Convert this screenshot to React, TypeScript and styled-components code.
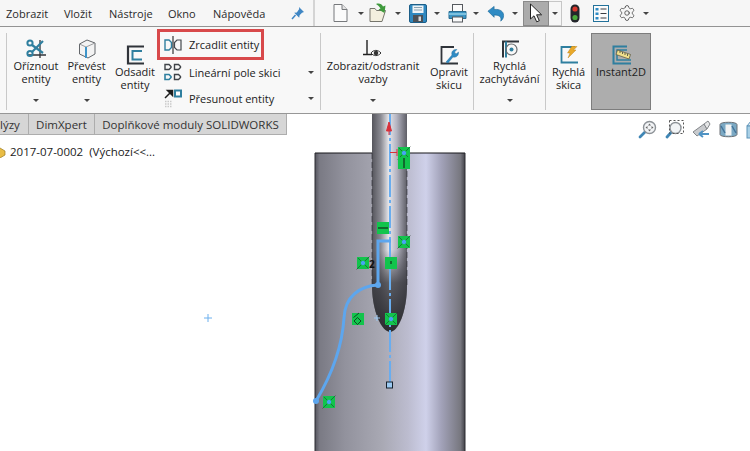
import React from 'react';
import styled, { createGlobalStyle } from 'styled-components';
import { Settings } from 'lucide-react';

const Global = createGlobalStyle`
    html, body {
        margin: 0;
        padding: 0;
        background: #fff;
    }
`;

const Page = styled.div`
    width: 750px;
    height: 451px;
    overflow: hidden;
    display: flex;
    flex-direction: column;
    font-family: "Open Sans", "Liberation Sans", sans-serif;
    font-size: 11px;
    line-height: 13px;
    color: #222;
    background: #fff;
`;

const TopBar = styled.div`
    height: 26px;
    flex: none;
    display: flex;
    background: #f6f6f6;
    border-bottom: 1px solid #939393;
    box-sizing: content-box;
`;

const MenuBar = styled.div`
    width: 315px;
    flex: none;
    display: flex;
    align-items: center;
    padding-left: 6px;
    box-sizing: border-box;
    border-right: 2px solid #d4d4d4;
`;

const MenuItem = styled.span<{ $width: number }>`
    width: ${(p) => p.$width}px;
    flex: none;
    font-size: 11px;
    color: #2a2a2a;
`;

const ToolBar = styled.div`
    flex: 1;
    display: flex;
    align-items: center;
    padding-left: 18px;
`;

const ToolSlot = styled.div<{ $width: number; $gap?: number }>`
    width: ${(p) => p.$width}px;
    height: 26px;
    flex: none;
    display: flex;
    align-items: center;
    gap: ${(p) => p.$gap ?? 6}px;
`;

const CursorButton = styled.div`
    width: 26px;
    height: 25px;
    flex: none;
    display: flex;
    align-items: center;
    justify-content: center;
    background: #ababab;
    border: 1px solid #8a8a8a;
    box-sizing: border-box;
`;

const CursorCaret = styled.div`
    width: 13px;
    height: 25px;
    flex: none;
    display: flex;
    align-items: center;
    justify-content: center;
    box-sizing: border-box;
    border: 1px solid #c6c6c6;
    border-left: none;
    margin-right: 8px;
`;

const Caret = styled.i`
    display: block;
    width: 0;
    height: 0;
    flex: none;
    border-left: 3px solid transparent;
    border-right: 3px solid transparent;
    border-top: 3px solid #444;
`;

const Ribbon = styled.div`
    height: 86px;
    flex: none;
    display: flex;
    background: #f8f8f8;
    border-bottom: 1px solid #979797;
    box-sizing: content-box;
`;

const Separator = styled.div<{ $left?: number }>`
    width: 1px;
    flex: none;
    background: #c9c9c9;
    margin: 6px 0 3px ${(p) => p.$left ?? 0}px;
`;

const BigButton = styled.div<{ $width: number; $low?: boolean; $left?: number; $active?: boolean }>`
    width: ${(p) => p.$width}px;
    margin-left: ${(p) => p.$left ?? 0}px;
    flex: none;
    display: flex;
    flex-direction: column;
    align-items: center;
    box-sizing: border-box;
    text-align: center;
    padding-top: ${(p) => (p.$low ? 18 : 12)}px;
    padding-bottom: 11px;
    ${(p) =>
        p.$active &&
        `
        background: #adadad;
        border: 1px solid #7d7d7d;
        margin-top: 6px;
        margin-bottom: 3px;
        padding-top: 11px;
    `}
`;

const IconSlot = styled.div`
    height: 20px;
    display: flex;
    align-items: center;
    justify-content: center;
    flex: none;
`;

const Label = styled.div`
    font-size: 11px;
    line-height: 13px;
    white-space: nowrap;
`;

const BottomCaret = styled(Caret)`
    margin-top: auto;
`;

const SmallColumn = styled.div`
    width: 163px;
    flex: none;
    display: flex;
    flex-direction: column;
    padding-top: 2px;
    box-sizing: border-box;
`;

const SmallRow = styled.div<{ $boxed?: boolean }>`
    display: flex;
    align-items: center;
    gap: 7px;
    box-sizing: border-box;
    white-space: nowrap;
    font-size: 11px;
    ${(p) =>
        p.$boxed
            ? `
        width: 107px;
        height: 31px;
        padding-left: 4px;
        border: 3px solid #d8494b;
    `
            : `
        height: 25.5px;
        padding: 0 6px 0 7px;
    `}
`;

const RowCaret = styled(Caret)`
    margin-left: auto;
`;

const Viewport = styled.div`
    flex: 1;
    position: relative;
    overflow: hidden;
    background: #fff;
`;

const ModelDrawing = styled.svg`
    position: absolute;
    left: 0;
    top: 0;
`;

const TabRow = styled.div`
    position: relative;
    display: flex;
    width: 287px;
    height: 21px;
    background: #fff;
`;

const Tab = styled.div<{ $width: number; $clipped?: boolean }>`
    width: ${(p) => p.$width}px;
    flex: none;
    display: flex;
    align-items: center;
    justify-content: ${(p) => (p.$clipped ? 'flex-start' : 'center')};
    box-sizing: border-box;
    background: #d6d6d6;
    border: 1px solid #adadad;
    border-top: none;
    border-left: none;
    font-size: 11.5px;
    white-space: nowrap;
    color: #333;
`;

const TreeRow = styled.div`
    position: relative;
    display: flex;
    align-items: center;
    gap: 4px;
    margin-top: 10px;
    margin-left: -6px;
    font-size: 11.5px;
    white-space: pre;
    color: #222;
`;

const ViewTools = styled.div`
    position: absolute;
    top: 6px;
    left: 638px;
    display: flex;
    align-items: center;
    gap: 8px;
`;

const teal = '#2f7f9f';
const dark = '#30343a';

const PinIcon = () => (
    <svg width="14" height="14" viewBox="0 0 14 14">
        <path d="M8 1l5 5-2 .8-2.4 2.4-.4 2.6-5-5 2.6-.4L8.200 3z" fill="#3f86c4" />
        <path d="M4.500 9L1 13" stroke="#3f86c4" strokeWidth="1.500" />
    </svg>
);

const NewIcon = () => (
    <svg width="15" height="20" viewBox="0 0 15 20">
        <path d="M1 1.500h8l5 5v12H1z" fill="#fbfbfb" stroke="#77797c" />
        <path d="M9 1.500v5h5" fill="#e3e3e3" stroke="#77797c" />
    </svg>
);

const OpenIcon = () => (
    <svg width="20" height="20" viewBox="0 0 20 20">
        <path d="M1 5.500h5l1.500 2h9l-3.500 11H1z" fill="#f3efdf" stroke="#76756c" />
        <path d="M7 1c3-1 6 0 7 2.500l2.500-1-1 7.500-6-3.500 2-1C10.500 3.500 9 2.500 7 1z" fill="#3f9a3c" />
    </svg>
);

const SaveIcon = () => (
    <svg width="18" height="19" viewBox="0 0 18 19">
        <rect x="0.500" y="0.500" width="17" height="18" rx="1.500" fill="#2f88c0" stroke="#1c5e88" />
        <rect x="3.500" y="1.500" width="11" height="7.500" fill="#eef3f6" />
        <path d="M5 3.500h8M5 6h8" stroke="#8aa3b3" />
        <rect x="4" y="11" width="10" height="7" fill="#4c5157" />
        <rect x="9.500" y="12.500" width="2.500" height="4.500" fill="#d5d8db" />
    </svg>
);

const PrintIcon = () => (
    <svg width="19" height="19" viewBox="0 0 19 19">
        <rect x="4.500" y="0.500" width="10" height="7" fill="#fafafa" stroke="#55595e" />
        <path d="M1 7.500h17v7H1z" fill="#3c95c4" stroke="#2a6d92" />
        <rect x="0.500" y="9" width="18" height="2" fill="#7cc0de" />
        <rect x="4.500" y="13" width="10" height="5" fill="#fafafa" stroke="#55595e" />
    </svg>
);

const UndoIcon = () => (
    <svg width="18" height="17" viewBox="0 0 19 17">
        <path d="M1 6L7.500 1v3.300c6-.8 10 2 10 6.200 0 2.500-1 4.500-3 6 1-3.500-.5-6.500-7-6.500v2.500z" fill="#2f8bc4" stroke="#1f6a9b" strokeWidth="0.700" />
    </svg>
);

const CursorIcon = () => (
    <svg width="14" height="20" viewBox="0 0 14 20">
        <path d="M1.500 1v15l3.500-3.200 2.700 6 2.600-1.100-2.700-5.900h5z" fill="#fff" stroke="#222" strokeLinejoin="round" />
    </svg>
);

const LightIcon = () => (
    <svg width="10" height="19" viewBox="0 0 10 19">
        <rect x="0.500" y="0.500" width="9" height="18" rx="4.500" fill="#23262a" />
        <circle cx="5" cy="5" r="2.600" fill="#d8392f" />
        <circle cx="5" cy="13.500" r="2.600" fill="#49a83b" />
    </svg>
);

const ListIcon = () => (
    <svg width="16" height="17" viewBox="0 0 16 17">
        <rect x="0.500" y="0.500" width="15" height="16" fill="#fbfbfb" stroke="#22719a" />
        <path d="M2.500 3h3v2.500h-3zM2.500 7.500h3V10h-3zM2.500 12h3v2.500h-3z" fill="#2f8bc4" />
        <path d="M7.500 4h6M7.500 8.500h6M7.500 13h6" stroke="#3a3d42" />
    </svg>
);

const TrimIcon = () => (
    <svg width="20" height="20" viewBox="0 0 20 20">
        <path d="M14 1v18M2 16h18" stroke={dark} strokeWidth="1.300" />
        <path d="M6 6l11 8M6 13l11-11" stroke={teal} strokeWidth="2.200" />
        <circle cx="4" cy="4" r="2.600" fill="none" stroke={teal} strokeWidth="2" />
        <circle cx="4" cy="14.500" r="2.600" fill="none" stroke={teal} strokeWidth="2" />
    </svg>
);

const ConvertIcon = () => (
    <svg width="18" height="20" viewBox="0 0 18 20">
        <path d="M9 1l8 3v11l-7 4-8.500-4V5z" fill="#f3f3f3" stroke="#63666a" />
        <path d="M1.500 5L8 8l9-4" fill="none" stroke="#9a9c9f" />
        <path d="M8 8v11" stroke="#3d94c9" strokeWidth="2" />
    </svg>
);

const OffsetIcon = () => (
    <svg width="19" height="20" viewBox="0 0 19 20">
        <path d="M18 1.500H2v17h16" fill="none" stroke={dark} strokeWidth="2.200" />
        <path d="M16 6H6.500v8.500H16" fill="none" stroke={teal} strokeWidth="2" />
    </svg>
);

const MirrorIcon = () => (
    <svg width="18" height="18" viewBox="0 0 18 18">
        <path d="M1 4h4l2.500 2.500v5L5 14H1z" fill="none" stroke={teal} strokeWidth="1.400" />
        <path d="M9 0v18" stroke="#222" strokeWidth="1.100" />
        <path d="M17 4h-4l-2.500 2.500v5L13 14h4z" fill="none" stroke="#44484d" strokeWidth="1.200" />
    </svg>
);

const PatternIcon = () => (
    <svg width="18" height="19" viewBox="0 0 18 19">
        <path d="M1 1.500h4l2 2v1l-2 2H1zM10.500 1.500h4l2 2v1l-2 2h-4z" fill="none" stroke="#3f4348" strokeWidth="1.400" />
        <path d="M1 11.500h4l2 2v1l-2 2H1z" fill="none" stroke={teal} strokeWidth="1.600" />
        <path d="M10.500 11.500h4l2 2v1l-2 2h-4z" fill="none" stroke="#3f4348" strokeWidth="1.400" />
    </svg>
);

const MoveIcon = () => (
    <svg width="18" height="19" viewBox="0 0 18 19">
        <path d="M1 9l6-6M3.500 1.500h5v5z" stroke="#1e1e1e" strokeWidth="1.500" fill="#1e1e1e" />
        <rect x="11" y="1.500" width="6" height="6" fill="#fff" stroke={teal} strokeWidth="2" />
        <path d="M1 12.500h7M1 15h7M1 17.500h7" stroke="#c9c9c9" strokeWidth="1.500" strokeDasharray="1.500 1" />
    </svg>
);

const RelationIcon = () => (
    <svg width="20" height="18" viewBox="0 0 20 18">
        <path d="M4 0v14M0 14.500h9" stroke="#222" strokeWidth="1.400" />
        <path d="M8 13c2.500-3.500 7-3.500 10 0-3 3.500-7.500 3.500-10 0z" fill="#fff" stroke="#333" />
        <circle cx="13" cy="13" r="2.300" fill="#333" />
    </svg>
);

const RepairIcon = () => (
    <svg width="19" height="19" viewBox="0 0 19 19">
        <path d="M14 1H1.500v16.500H18" fill="none" stroke={dark} strokeWidth="1.800" />
        <path d="M6 16l6-7c-1-3 1-6 5-5.500l-2.500 2.500 1.500 2 2.500-2c.5 3.500-2.500 6-5.500 5L8 17z" fill="#2f8bc4" stroke="#1f6a9b" strokeWidth="0.400" />
    </svg>
);

const SnapIcon = () => (
    <svg width="18" height="19" viewBox="0 0 18 19">
        <path d="M18 1.500H2v16" fill="none" stroke={dark} strokeWidth="2" />
        <path d="M5 1.500v16" stroke={teal} strokeWidth="2" />
        <circle cx="10.500" cy="9.500" r="5.500" fill="none" stroke="#6a6d70" strokeWidth="1.200" />
        <circle cx="10.500" cy="9.500" r="2" fill={teal} />
    </svg>
);

const QuickSketchIcon = () => (
    <svg width="18" height="18" viewBox="0 0 18 18">
        <path d="M15 1H1.500v15.500H18" fill="none" stroke={teal} strokeWidth="1.800" />
        <path d="M12 0l5 .5-3.500 3.500h2.500L8 12l2-5H7.500z" fill="#e9a92a" stroke="#b77a12" strokeWidth="0.400" />
    </svg>
);

const InstantIcon = () => (
    <svg width="19" height="20" viewBox="0 0 19 20">
        <path d="M15 1.500H1.500v17H19" fill="none" stroke={teal} strokeWidth="2" />
        <path d="M15 5H5v10h14" fill="none" stroke={teal} strokeWidth="1.500" />
        <path d="M5.500 5l13 4.500-1.500 4.500-13-4.500z" fill="#f0df8c" stroke="#55503a" strokeWidth="0.700" />
        <path d="M8 6v2M10.500 7v2M13 8v2M15.500 9v2" stroke="#444" strokeWidth="0.800" />
    </svg>
);

const FolderIcon = () => (
    <svg width="12" height="12" viewBox="0 0 12 12">
        <path d="M1 6l5-4 5 3v4l-5 3-5-2z" fill="#e9bd45" stroke="#9b7a1f" strokeWidth="0.700" />
    </svg>
);

const ZoomFitIcon = () => (
    <svg width="19" height="19" viewBox="0 0 19 19">
        <path d="M7.500 11.500L2 17" stroke="#3f86b5" strokeWidth="2.800" strokeLinecap="round" />
        <circle cx="11.500" cy="7.500" r="6" fill="#f2f4f6" stroke="#8d9297" strokeWidth="1.400" />
        <path d="M11.500 3.500l1.500 2h-3zM11.500 11.500l1.500-2h-3zM7.500 7.500l2-1.500v3zM15.500 7.500l-2-1.500v3z" fill="#666" />
    </svg>
);

const ZoomAreaIcon = () => (
    <svg width="19" height="19" viewBox="0 0 19 19">
        <path d="M6.500 12L2 17" stroke="#3f86b5" strokeWidth="2.800" strokeLinecap="round" />
        <circle cx="10.500" cy="8" r="5.500" fill="#f2f4f6" stroke="#8d9297" strokeWidth="1.400" />
        <rect x="4.500" y="0.500" width="14" height="13" fill="none" stroke="#555" strokeDasharray="2 2" />
    </svg>
);

const PrevViewIcon = () => (
    <svg width="19" height="19" viewBox="0 0 19 19">
        <path d="M1 12l11-8 3 5-10 7z" fill="#c9cbce" stroke="#84878b" />
        <path d="M12 4l4-3 2 3-3 5z" fill="#e6e7e8" stroke="#84878b" />
        <path d="M7 14h10M7 14l4-3M7 14l4 3" stroke="#4f93c4" strokeWidth="2" fill="none" />
    </svg>
);

const SectionIcon = () => (
    <svg width="19" height="17" viewBox="0 0 19 17">
        <path d="M1 3.500C1 .5 18 .5 18 3.500v10c0 3-17 3-17 0z" fill="#7ba9c4" stroke="#6c7176" />
        <path d="M6.500 3.500h6v11h-6z" fill="#f4f4f4" />
        <path d="M2 5l4 7M13 5l4 7" stroke="#44749a" strokeWidth="1.500" />
    </svg>
);

const BoxIcon = () => (
    <svg width="17" height="19" viewBox="0 0 17 19">
        <path d="M1 6l4-5h10l-3 5z" fill="#e6eef4" stroke="#5c93b8" />
        <rect x="1" y="6" width="14" height="12" fill="#a9d0e6" stroke="#5c93b8" />
    </svg>
);

type MarkerKind = 'cross' | 'stem' | 'dash' | 'bar' | 'tangent';

const Marker = ({ x, y, kind }: { x: number; y: number; kind: MarkerKind }) => (
    <g transform={`translate(${x} ${y})`}>
        <rect width="12" height="12" fill="#12c44c" />
        {kind === 'cross' && (
            <>
                <path d="M-0.500 12.500L12.500 -0.500M1 1l10 10" stroke="#1c2b24" strokeWidth="0.500" />
                <circle cx="6" cy="6" r="2.200" fill="#46a6f2" />
            </>
        )}
        {kind === 'stem' && <path d="M6 1v10" stroke="#111" strokeWidth="1" />}
        {kind === 'dash' && <path d="M1 6h10" stroke="#111" strokeWidth="1" />}
        {kind === 'bar' && <path d="M6 4v3" stroke="#111" strokeWidth="1" />}
        {kind === 'tangent' && (
            <>
                <path d="M1.500 4.500L7 0" stroke="#111" strokeWidth="0.700" />
                <path d="M5.500 4.500l3.500 3.500-3.500 3.500L2 8z" fill="none" stroke="#111" strokeWidth="0.700" />
            </>
        )}
    </g>
);

const Model = () => (
    <ModelDrawing width="750" height="337" viewBox="0 114 750 337">
        <defs>
            <linearGradient id="bigBody" x1="315" x2="465" y1="0" y2="0" gradientUnits="userSpaceOnUse">
                <stop offset="0" stopColor="#55555e" />
                <stop offset="0.03" stopColor="#7a7a84" />
                <stop offset="0.2" stopColor="#92929d" />
                <stop offset="0.45" stopColor="#a9a9b4" />
                <stop offset="0.62" stopColor="#bcbccf" />
                <stop offset="0.74" stopColor="#cfd1ea" />
                <stop offset="0.84" stopColor="#a3a3ba" />
                <stop offset="0.97" stopColor="#77777f" />
                <stop offset="1" stopColor="#43434a" />
            </linearGradient>
            <linearGradient id="shaft" x1="372" x2="407" y1="0" y2="0" gradientUnits="userSpaceOnUse">
                <stop offset="0" stopColor="#55555c" />
                <stop offset="0.25" stopColor="#8a8a92" />
                <stop offset="0.48" stopColor="#e6e6ea" />
                <stop offset="0.7" stopColor="#b5b5c2" />
                <stop offset="1" stopColor="#5e5e66" />
            </linearGradient>
            <linearGradient id="tip" x1="0" x2="0" y1="250" y2="332" gradientUnits="userSpaceOnUse">
                <stop offset="0" stopColor="#3a3a40" stopOpacity="0" />
                <stop offset="0.4" stopColor="#3a3a40" stopOpacity="0.8" />
                <stop offset="1" stopColor="#2a2a2e" stopOpacity="1" />
            </linearGradient>
        </defs>
        <rect x="315" y="153" width="150" height="298" fill="url(#bigBody)" />
        <path d="M315 153h150" stroke="#16161a" strokeWidth="1.200" />
        <path d="M315 153v298M465 153v298" stroke="#2d2d33" strokeWidth="1" />
        <path d="M372 113V285C372 312 382 332 390 332C398 332 407 312 407 285V113Z" fill="url(#shaft)" />
        <path d="M372 113V285C372 312 382 332 390 332C398 332 407 312 407 285V113Z" fill="url(#tip)" />
        <path d="M372 153V285M407 153V285" fill="none" stroke="#26262b" strokeWidth="0.600" strokeDasharray="6 3" />
        <path d="M390 113V385" stroke="#69adef" strokeWidth="2" strokeDasharray="22 3 3 3" />
        <path d="M389 122l-2.500 9h5zM389 131v4" fill="#d9303a" stroke="#d9303a" />
        <path d="M390 152.500h7M397 149v7" stroke="#d9303a" strokeWidth="1" />
        <path d="M378 285V241H391" fill="none" stroke="#5da6ee" strokeWidth="3" />
        <path d="M378 285C360 286 345 296 344 318C342 350 331 376 316 401" fill="none" stroke="#5da6ee" strokeWidth="3" />
        <circle cx="378" cy="285" r="3" fill="#5da6ee" />
        <circle cx="316" cy="401" r="3" fill="#5da6ee" />
        <rect x="386.500" y="382" width="6" height="6" fill="#9ccaf2" stroke="#14202c" strokeWidth="1" />
        <path d="M204 318h8M208 314v8" stroke="#6cb0ee" strokeWidth="1" />
        <path d="M374 318h6M377 315v6" stroke="#9cc8f0" strokeWidth="1" />
        <Marker x={398} y={147} kind="cross" />
        <Marker x={398} y={157} kind="stem" />
        <Marker x={377} y={222} kind="dash" />
        <Marker x={398} y={236} kind="cross" />
        <Marker x={357} y={257} kind="cross" />
        <Marker x={385} y={257} kind="bar" />
        <Marker x={352} y={313} kind="tangent" />
        <Marker x={385} y={313} kind="cross" />
        <Marker x={323} y={396} kind="cross" />
        <text x="369" y="268" fontFamily="'Open Sans', sans-serif" fontSize="10" fontWeight="700" fill="#111">2</text>
    </ModelDrawing>
);

const App: React.FC = () => {
    return (
        <Page>
            <Global />
            <TopBar>
                <MenuBar>
                    <MenuItem $width={58}>Zobrazit</MenuItem>
                    <MenuItem $width={45}>Vložit</MenuItem>
                    <MenuItem $width={59}>Nástroje</MenuItem>
                    <MenuItem $width={45}>Okno</MenuItem>
                    <MenuItem $width={78}>Nápověda</MenuItem>
                    <PinIcon />
                </MenuBar>
                <ToolBar>
                    <ToolSlot $width={36} $gap={10}><NewIcon /><Caret /></ToolSlot>
                    <ToolSlot $width={40}><OpenIcon /><Caret /></ToolSlot>
                    <ToolSlot $width={39} $gap={7}><SaveIcon /><Caret /></ToolSlot>
                    <ToolSlot $width={39}><PrintIcon /><Caret /></ToolSlot>
                    <ToolSlot $width={36} $gap={7}><UndoIcon /><Caret /></ToolSlot>
                    <CursorButton><CursorIcon /></CursorButton>
                    <CursorCaret><Caret /></CursorCaret>
                    <ToolSlot $width={23}><LightIcon /></ToolSlot>
                    <ToolSlot $width={25}><ListIcon /></ToolSlot>
                    <ToolSlot $width={40} $gap={7}><Settings size={18} strokeWidth={1} color="#3a3a3a" /><Caret /></ToolSlot>
                </ToolBar>
            </TopBar>
            <Ribbon>
                <Separator $left={6} />
                <BigButton $width={50} $left={4}>
                    <IconSlot><TrimIcon /></IconSlot>
                    <Label>Oříznout<br />entity</Label>
                    <BottomCaret />
                </BigButton>
                <BigButton $width={51}>
                    <IconSlot><ConvertIcon /></IconSlot>
                    <Label>Převést<br />entity</Label>
                    <BottomCaret />
                </BigButton>
                <BigButton $width={44} $left={1} $low>
                    <IconSlot><OffsetIcon /></IconSlot>
                    <Label>Odsadit<br />entity</Label>
                </BigButton>
                <SmallColumn>
                    <SmallRow $boxed><MirrorIcon />Zrcadlit entity</SmallRow>
                    <SmallRow><PatternIcon />Lineární pole skici<RowCaret /></SmallRow>
                    <SmallRow><MoveIcon />Přesunout entity<RowCaret /></SmallRow>
                </SmallColumn>
                <Separator />
                <BigButton $width={104}>
                    <IconSlot><RelationIcon /></IconSlot>
                    <Label>Zobrazit/odstranit<br />vazby</Label>
                    <BottomCaret />
                </BigButton>
                <BigButton $width={48} $low>
                    <IconSlot><RepairIcon /></IconSlot>
                    <Label>Opravit<br />skicu</Label>
                </BigButton>
                <Separator />
                <BigButton $width={71}>
                    <IconSlot><SnapIcon /></IconSlot>
                    <Label>Rychlá<br />zachytávání</Label>
                    <BottomCaret />
                </BigButton>
                <Separator />
                <BigButton $width={45} $low>
                    <IconSlot><QuickSketchIcon /></IconSlot>
                    <Label>Rychlá<br />skica</Label>
                </BigButton>
                <BigButton $width={60} $low $active>
                    <IconSlot><InstantIcon /></IconSlot>
                    <Label>Instant2D</Label>
                </BigButton>
            </Ribbon>
            <Viewport>
                <Model />
                <TabRow>
                    <Tab $width={29} $clipped>lýzy</Tab>
                    <Tab $width={66}>DimXpert</Tab>
                    <Tab $width={192}>Doplňkové moduly SOLIDWORKS</Tab>
                </TabRow>
                <TreeRow>
                    <FolderIcon />
                    <span>2017-07-0002  (Výchozí&lt;&lt;...</span>
                </TreeRow>
                <ViewTools>
                    <ZoomFitIcon />
                    <ZoomAreaIcon />
                    <PrevViewIcon />
                    <SectionIcon />
                    <BoxIcon />
                </ViewTools>
            </Viewport>
        </Page>
    );
};

export default App;
